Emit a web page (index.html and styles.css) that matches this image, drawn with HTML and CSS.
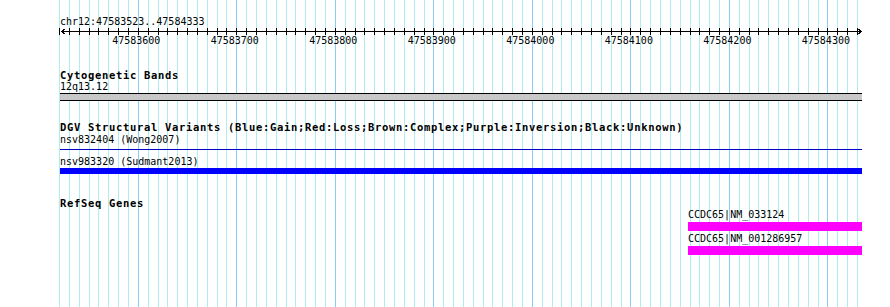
FILE: index.html
```html
<!DOCTYPE html>
<html lang="en">
<head>
  <meta charset="UTF-8">
  <title>chr12:47583523..47584333</title>
  <link rel="stylesheet" href="styles.css">
</head>
<body>
  <div class="browser">
    <!-- background grid: one line every 10 bp, darker every 100 bp -->
    <div class="grid">
      <span></span><span></span><span></span><span></span><span></span><span></span><span></span><span></span><span></span><span></span>
      <span></span><span></span><span></span><span></span><span></span><span></span><span></span><span></span><span></span><span></span>
      <span></span><span></span><span></span><span></span><span></span><span></span><span></span><span></span><span></span><span></span>
      <span></span><span></span><span></span><span></span><span></span><span></span><span></span><span></span><span></span><span></span>
      <span></span><span></span><span></span><span></span><span></span><span></span><span></span><span></span><span></span><span></span>
      <span></span><span></span><span></span><span></span><span></span><span></span><span></span><span></span><span></span><span></span>
      <span></span><span></span><span></span><span></span><span></span><span></span><span></span><span></span><span></span><span></span>
      <span></span><span></span><span></span><span></span><span></span><span></span><span></span><span></span><span></span><span></span>
      <span></span>
    </div>

    <div class="tracks">
      <div class="locus">chr12:47583523..47584333</div>

      <div class="ruler">
        <div class="ticks">
          <span></span><span></span><span></span><span></span><span></span><span></span><span></span><span></span><span></span><span></span>
          <span></span><span></span><span></span><span></span><span></span><span></span><span></span><span></span><span></span><span></span>
          <span></span><span></span><span></span><span></span><span></span><span></span><span></span><span></span><span></span><span></span>
          <span></span><span></span><span></span><span></span><span></span><span></span><span></span><span></span><span></span><span></span>
          <span></span><span></span><span></span><span></span><span></span><span></span><span></span><span></span><span></span><span></span>
          <span></span><span></span><span></span><span></span><span></span><span></span><span></span><span></span><span></span><span></span>
          <span></span><span></span><span></span><span></span><span></span><span></span><span></span><span></span><span></span><span></span>
          <span></span><span></span><span></span><span></span><span></span><span></span><span></span><span></span><span></span><span></span>
          <span></span>
        </div>
        <svg class="axis" width="803" height="7" viewBox="0 0 803 7">
          <path d="M2 3.5H802M6.5 0.5L2.5 3.5L6.5 6.5M798.5 0.5L802.5 3.5L798.5 6.5" fill="none" stroke="#000" stroke-width="1" shape-rendering="crispEdges"/>
        </svg>
      </div>

      <div class="scale">
        <span>47583600</span>
        <span>47583700</span>
        <span>47583800</span>
        <span>47583900</span>
        <span>47584000</span>
        <span>47584100</span>
        <span>47584200</span>
        <span>47584300</span>
      </div>

      <section class="track">
        <h2 class="track-title">Cytogenetic Bands</h2>
        <div class="feature-label">12q13.12</div>
        <div class="band"></div>
      </section>

      <section class="track track-dgv">
        <h2 class="track-title">DGV Structural Variants (Blue:Gain;Red:Loss;Brown:Complex;Purple:Inversion;Black:Unknown)</h2>
        <div class="feature-label variant-first">nsv832404 (Wong2007)</div>
        <div class="variant-line"></div>
        <div class="feature-label variant-second">nsv983320 (Sudmant2013)</div>
        <div class="variant-bar"></div>
      </section>

      <section class="track">
        <h2 class="track-title">RefSeq Genes</h2>
        <div class="gene">
          <div class="feature-label">CCDC65|NM_033124</div>
          <div class="gene-bar"></div>
        </div>
        <div class="gene gene-next">
          <div class="feature-label">CCDC65|NM_001286957</div>
          <div class="gene-bar"></div>
        </div>
      </section>
    </div>
  </div>
</body>
</html>
```

FILE: styles.css
```css
/* Basic Reset */
* {
  margin: 0;
  padding: 0;
  box-sizing: border-box;
}
body {
  font-family: "DejaVu Sans Mono", "Liberation Mono", monospace;
  font-size: 10px;
  line-height: 12px;
  background: #fff;
  color: #000;
}
.browser {
  position: relative;
  height: 307px;
  overflow: hidden;
}

/* grid behind the tracks */
.grid {
  position: absolute;
  top: 0;
  bottom: 0;
  left: 59px;
  width: 799px;
  display: grid;
  grid-template-columns: repeat(81, 1fr);
  border-right: 1px solid #afeeee;
}
.grid span {
  border-left: 1px solid #afeeee;
}
.grid span:nth-child(10n+9) {
  border-left-color: #87cefa;
}

.tracks {
  position: relative;
  margin-left: 60px;
  width: 802px;
  display: flex;
  flex-direction: column;
}
.locus {
  margin-top: 16px;
}

/* ruler */
.ruler {
  position: relative;
  margin-left: -1px;
  height: 7px;
}
.ticks {
  display: grid;
  grid-template-columns: repeat(81, 1fr);
  width: 799px;
  height: 7px;
  border-right: 1px solid #000;
}
.ticks span {
  border-left: 1px solid #000;
}
.ruler .axis {
  position: absolute;
  top: 0;
  left: 0;
}
.scale {
  display: flex;
  padding-left: 27px;
  line-height: 11px;
}
.scale span {
  flex: none;
  width: 98.52px;
  text-align: center;
}

/* tracks */
.track {
  display: flex;
  flex-direction: column;
  margin-top: 23px;
}
.track-dgv {
  margin-top: 20px;
}
.track-title {
  font-size: 10.5px;
  font-weight: bold;
  letter-spacing: 0.68px;
  line-height: 12px;
  white-space: nowrap;
}
.feature-label {
  white-space: nowrap;
}
.band {
  height: 8px;
  background: #c8c8c8;
  border-top: 1px solid #000;
  border-bottom: 1px solid #000;
}
.variant-first {
  margin-top: 1px;
}
.variant-line {
  margin-top: 3px;
  height: 1px;
  background: #0000c8;
}
.variant-second {
  margin-top: 6px;
}
.variant-bar {
  height: 6px;
  background: #0000ff;
}
.gene {
  margin-left: 628px;
}
.gene-next {
  margin-top: 2px;
}
.gene-bar {
  margin-top: 1px;
  height: 9px;
  background: #ff00ff;
}
```
